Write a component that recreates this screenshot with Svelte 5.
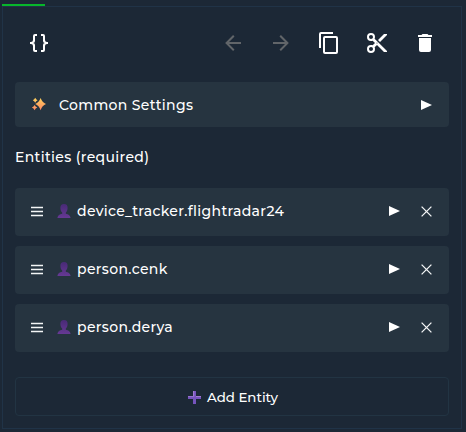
<script>
  const entities = ['device_tracker.flightradar24', 'person.cenk', 'person.derya'];
  const tools = [
    { label: 'Undo', off: true, d: 'M20 11V13H8L13.5 18.5L12.08 19.92L4.16 12L12.08 4.08L13.5 5.5L8 11H20Z' },
    { label: 'Redo', off: true, d: 'M4 11V13H16L10.5 18.5L11.92 19.92L19.84 12L11.92 4.08L10.5 5.5L16 11H4Z' },
    { label: 'Copy', d: 'M19 21H8V7H19M19 5H8A2 2 0 0 0 6 7V21A2 2 0 0 0 8 23H19A2 2 0 0 0 21 21V7A2 2 0 0 0 19 5M16 1H4A2 2 0 0 0 2 3V17H4V3H16V1Z' },
    { label: 'Cut', d: 'M19 3L13 9L15 11L22 4V3M12 12.5A.5.5 0 0 1 11.5 12A.5.5 0 0 1 12 11.5A.5.5 0 0 1 12.5 12A.5.5 0 0 1 12 12.5M6 20A2 2 0 0 1 4 18C4 16.89 4.9 16 6 16A2 2 0 0 1 8 18C8 19.11 7.1 20 6 20M6 8A2 2 0 0 1 4 6C4 4.89 4.9 4 6 4A2 2 0 0 1 8 6C8 7.11 7.1 8 6 8M9.64 7.64C9.87 7.14 10 6.59 10 6A4 4 0 0 0 6 2A4 4 0 0 0 2 6A4 4 0 0 0 6 10C6.59 10 7.14 9.87 7.64 9.64L10 12L7.64 14.36C7.14 14.13 6.59 14 6 14A4 4 0 0 0 2 18A4 4 0 0 0 6 22A4 4 0 0 0 10 18C10 17.41 9.87 16.86 9.64 16.36L12 14L19 21H22V20L9.64 7.64Z' },
    { label: 'Delete', d: 'M19 4H15.5L14.5 3H9.5L8.5 4H5V6H19M6 19A2 2 0 0 0 8 21H16A2 2 0 0 0 18 19V7H6V19Z' }
  ];
</script>

<div class="page">
  <div class="tab"></div>
  <section class="panel">
    <header class="toolbar">
      <svg class="icon braces" viewBox="0 0 24 24"><path d="M8 3A2 2 0 0 0 6 5V9A2 2 0 0 1 4 11H3V13H4A2 2 0 0 1 6 15V19A2 2 0 0 0 8 21H10V19H8V14A2 2 0 0 0 6 12A2 2 0 0 0 8 10V5H10V3M16 3A2 2 0 0 1 18 5V9A2 2 0 0 0 20 11H21V13H20A2 2 0 0 0 18 15V19A2 2 0 0 1 16 21H14V19H16V14A2 2 0 0 1 18 12A2 2 0 0 1 16 10V5H14V3H16Z" /></svg>
      {#each tools as tool}
        <svg class="icon" class:off={tool.off} viewBox="0 0 24 24" aria-label={tool.label}><path d={tool.d} /></svg>
      {/each}
    </header>

    <div class="card common">
      <svg class="sparkles" viewBox="0 0 16 16">
        <defs><linearGradient id="gold" x2="0" y2="1"><stop stop-color="#ffd45c" /><stop offset="1" stop-color="#ff8663" /></linearGradient></defs>
        <path fill="url(#gold)" d="M9.6 2Q11.2 6.4 15 8Q11.2 9.6 9.6 14.2Q8 9.6 4.2 8Q8 6.4 9.6 2ZM4.2 1.8Q5 3.7 6.6 4.3Q5 5 4.2 6.8Q3.4 5 1.8 4.3Q3.4 3.7 4.2 1.8ZM3.6 9Q4.4 10.9 6.3 11.6Q4.4 12.4 3.6 14.2Q2.8 12.4 .9 11.6Q2.8 10.9 3.6 9Z" />
      </svg>
      <span class="title">Common Settings</span>
      <svg class="play" viewBox="0 0 11 10"><path d="M0 0L11 5L0 10Z" /></svg>
    </div>

    <div class="label">Entities (required)</div>

    <div class="list">
      {#each entities as entity}
        <div class="card row">
          <svg class="grip" viewBox="0 0 12 11"><path d="M0 1.5H12M0 5.5H12M0 9.5H12" /></svg>
          <svg class="person" viewBox="0 0 14 14">
            <defs><linearGradient id="violet" x2="0" y2="1"><stop stop-color="#482a76" /><stop offset="1" stop-color="#663994" /></linearGradient></defs>
            <path fill="url(#violet)" d="M7 0C4.5 0 3.3 1.5 3.4 4C3.5 6.3 4.1 7.7 5.2 8.6V9.7C2.6 10 .8 11.4 .4 14H13.6C13.2 11.4 11.4 10 8.8 9.7V8.6C9.9 7.7 10.5 6.3 10.6 4C10.7 1.5 9.5 0 7 0Z" />
          </svg>
          <span class="name">{entity}</span>
          <svg class="play" viewBox="0 0 11 10"><path d="M0 0L11 5L0 10Z" /></svg>
          <svg class="close" viewBox="0 0 11 11"><path d="M.6 .6L10.4 10.4M10.4 .6L.6 10.4" /></svg>
        </div>
      {/each}
    </div>

    <button class="add">
      <svg class="plus" viewBox="0 0 13 13"><path fill="#7654bd" d="M5 0H8V5H13V8H8V13H5V8H0V5H5Z" /><path fill="#a17bd2" d="M5 0H6.2V5.8H0V5H5ZM8 5H13V5.9H8Z" /></svg>
      <span>Add Entity</span>
    </button>
  </section>
</div>

<style>
  :global(body) { background: #1c2836; }
  .page {
    box-sizing: border-box;
    width: 466px;
    height: 432px;
    padding: 4px 4px 0 2px;
    background: #1c2836;
    color: #fff;
    font-family: Montserrat, Inter, sans-serif;
    font-size: 14px;
    font-weight: 500;
    letter-spacing: .34px;
    overflow: hidden;
  }
  .tab { width: 43px; height: 2px; background: #07b62b; }
  .panel {
    box-sizing: border-box;
    height: 423px;
    border: 1px solid #203347;
    padding: 0 12px;
    display: flex;
    flex-direction: column;
  }
  svg { display: block; flex: none; fill: #fff; }
  .toolbar {
    height: 75px;
    flex: none;
    box-sizing: border-box;
    padding: 24px 12px 0;
    display: flex;
    gap: 24px;
  }
  .icon { width: 24px; height: 24px; }
  .braces { margin-right: auto; }
  .off { fill: #616569; }
  .card {
    background: #263440;
    border-radius: 4px;
    display: flex;
    align-items: center;
    box-sizing: border-box;
    flex: none;
  }
  .common { height: 45px; padding: 0 17px 0 16px; }
  .sparkles { width: 16px; height: 16px; margin-right: 12px; position: relative; top: -1px; }
  .title { line-height: 20px; }
  .play { width: 11px; height: 10px; margin-left: auto; }
  .label { height: 61px; line-height: 60px; flex: none; }
  .list { display: flex; flex-direction: column; gap: 10px; }
  .row { height: 48px; padding: 0 17px 2px 16px; }
  .grip { width: 12px; height: 11px; stroke: #f3f5f6; stroke-width: 1.3; }
  .person { width: 14px; height: 14px; margin: 0 6px 0 14px; }
  .name { line-height: 20px; }
  .close { width: 11px; height: 11px; margin-left: 21px; stroke: #f4f5f6; stroke-width: 1.3; fill: none; }
  .add {
    margin: 25px 0 0;
    height: 39px;
    box-sizing: border-box;
    padding: 1px 0 0 2px;
    display: flex;
    align-items: center;
    justify-content: center;
    gap: 6px;
    border: 1px solid #223443;
    border-radius: 4px;
    background: transparent;
    color: inherit;
    font: 500 13.333px Montserrat, Inter, sans-serif;
    letter-spacing: normal;
  }
  .plus { width: 13px; height: 13px; }
</style>
